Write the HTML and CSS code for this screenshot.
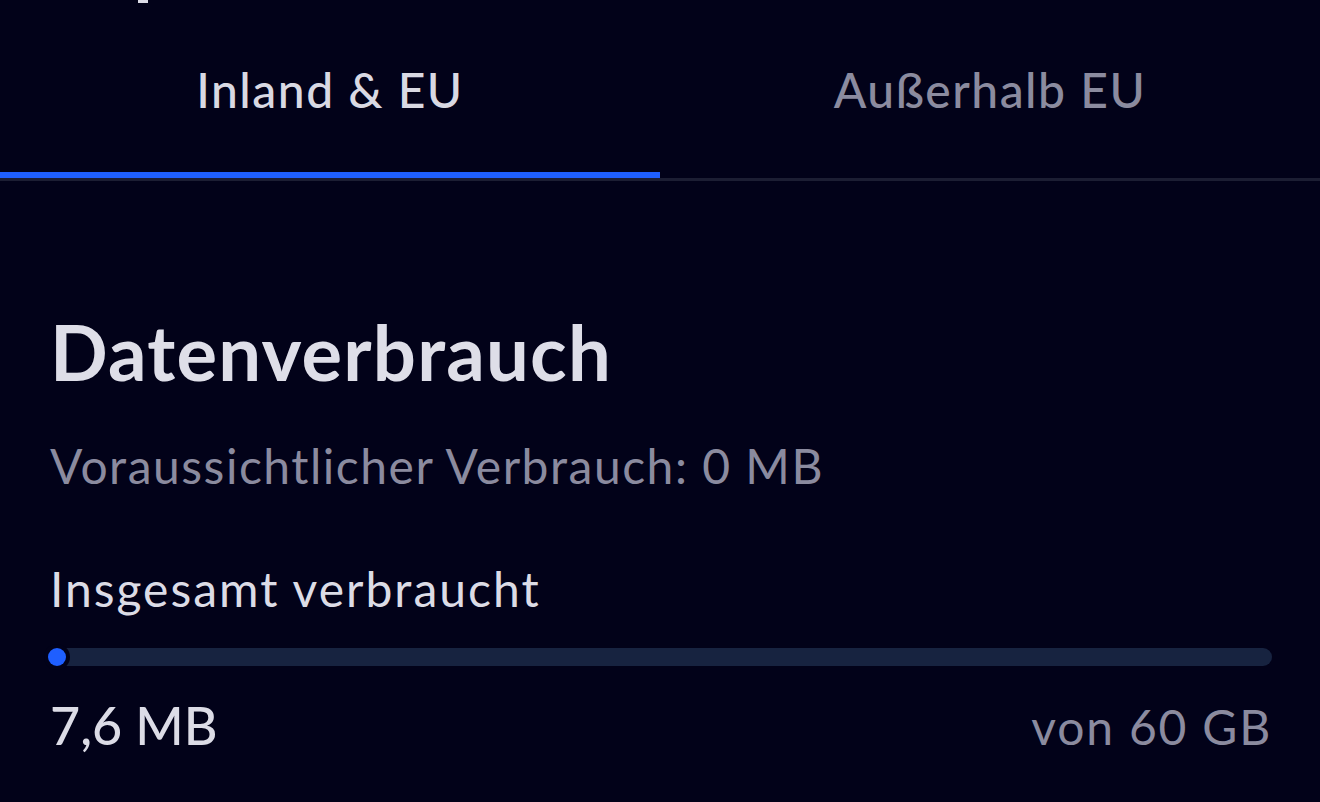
FILE: index.html
```html
<!DOCTYPE html>
<html>
<head>
    <title>Datenverbrauch</title>
    <link rel="stylesheet" href="styles.css">
</head>
<body>
    <div class="screen">
        <div class="peek"></div>
        <div class="tabs">
            <div class="tab active">Inland &amp; EU</div>
            <div class="tab">Außerhalb EU</div>
        </div>
        <div class="usage">
            <h1>Datenverbrauch</h1>
            <p class="forecast">Voraussichtlicher Verbrauch: 0 MB</p>
            <p class="label">Insgesamt verbraucht</p>
            <div class="track">
                <div class="fill" style="width: 0.01%"></div>
            </div>
            <div class="values">
                <span class="used">7,6 MB</span>
                <span class="total">von 60 GB</span>
            </div>
        </div>
    </div>
</body>
</html>
```

FILE: styles.css
```css
body {
    font-family: Lato, 'Noto Sans', sans-serif;
    margin: 0;
    background-color: #020219;
    color: #dcdce6;
}
.screen {
    width: 1320px;
    height: 802px;
    overflow: hidden;
    position: relative;
}
.peek {
    position: absolute;
    top: 0;
    left: 138px;
    width: 10px;
    height: 3px;
    background-color: #dcdce6;
}
.tabs {
    display: flex;
    border-bottom: 3px solid #1c1e33;
}
.tab {
    flex: 1;
    height: 178px;
    box-sizing: border-box;
    padding-top: 61px;
    text-align: center;
    font-size: 48px;
    line-height: 1.2;
    font-weight: 500;
    letter-spacing: 1.5px;
    color: #8b8b9f;
    border-bottom: 6px solid transparent;
}
.tab.active {
    color: #d9d9e3;
    border-bottom-color: #1f5fff;
}
.usage {
    padding: 125px 48px 0 50px;
}
h1 {
    margin: 0;
    font-size: 76px;
    line-height: 1.2;
    font-weight: 700;
    letter-spacing: 1.2px;
    color: #dedee8;
}
.forecast {
    margin: 40px 0 0;
    font-size: 48px;
    line-height: 1.2;
    letter-spacing: 1.5px;
    color: #8b8b9f;
}
.label {
    margin: 65px 0 0;
    font-size: 48px;
    line-height: 1.2;
    letter-spacing: 2px;
}
.track {
    margin: 31px 0 0 -2px;
    height: 18px;
    border-radius: 9px;
    background-color: #172340;
}
.fill {
    min-width: 18px;
    height: 18px;
    border-radius: 9px;
    background-color: #1f5fff;
    box-shadow: 0 0 0 4px #020219;
}
.values {
    display: flex;
    justify-content: space-between;
    align-items: baseline;
    margin-top: 28px;
    line-height: 1.2;
}
.used {
    font-size: 52px;
    font-weight: 500;
}
.total {
    font-size: 48px;
    letter-spacing: 1.8px;
    color: #8b8b9f;
}
```
